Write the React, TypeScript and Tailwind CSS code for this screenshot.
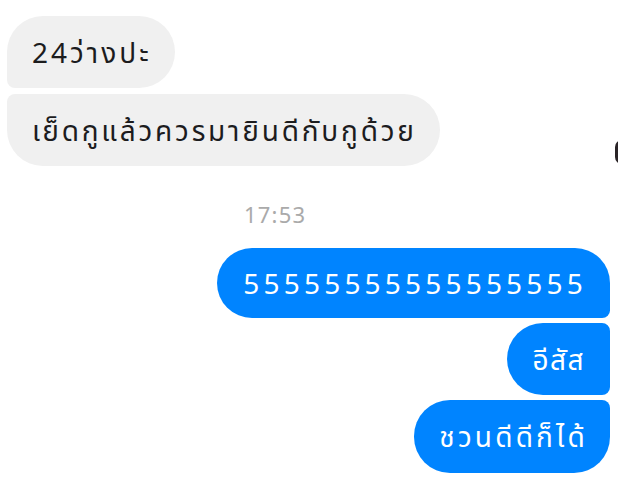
const font = { fontFamily: '"Noto Sans", "Noto Sans Thai", "Liberation Sans", sans-serif' };

const App = () => {
  return (
    <div
      className="relative w-[618px] h-[481px] overflow-hidden bg-white flex flex-col"
      style={font}
    >
      {/* incoming */}
      <div className="flex flex-col items-start gap-[6px] pt-[16px] pl-[7px]">
        <div className="bg-[#f0f0f0] text-[#1c1c1e] text-[28px] leading-[36px] tracking-[3px] pl-[25px] pr-[23px] py-[18px] rounded-[36px] rounded-bl-[8px]">
          24ว่างปะ
        </div>
        <div className="bg-[#f0f0f0] text-[#1c1c1e] text-[28px] leading-[36px] tracking-[2.8px] pl-[25px] pr-[23px] py-[18px] rounded-[36px] rounded-tl-[8px]">
          เย็ดกูแล้วควรมายินดีกับกูด้วย
        </div>
      </div>

      {/* time */}
      <div className="mt-[34px] pl-[244px] text-[22px] leading-[28px] tracking-[1.2px] text-[#aaaaaa]">17:53</div>

      {/* outgoing */}
      <div className="flex flex-col items-end gap-[5px] mt-[20px] pr-[8px]">
        <div className="bg-[#0084ff] text-white text-[28px] leading-[36px] tracking-[4.2px] pl-[26px] pr-[23px] py-[17px] rounded-[36px] rounded-br-[8px]">
          55555555555555555
        </div>
        <div className="bg-[#0084ff] text-white text-[28px] leading-[36px] tracking-[1.5px] px-[25px] py-[18px] rounded-[36px] rounded-tr-[8px] rounded-br-[8px]">
          อีสัส
        </div>
        <div className="bg-[#0084ff] text-white text-[28px] leading-[36px] tracking-[3.2px] pl-[25px] pr-[22px] pt-[18px] pb-[19px] rounded-[36px] rounded-tr-[8px]">
          ชวนดีดีก็ได้
        </div>
      </div>

      {/* partial avatar edge */}
      <div className="absolute left-[615px] top-[140px] w-[14px] h-[24px] rounded-full bg-[#2a2427]" />
    </div>
  );
};

export default App;
